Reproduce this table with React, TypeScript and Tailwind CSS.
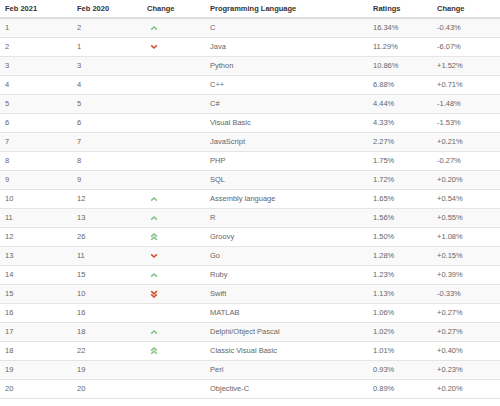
type Trend = "up" | "down" | "up2" | "down2" | "";

const rows: [number, number, Trend, string, string, string][] = [
  [1, 2, "up", "C", "16.34%", "-0.43%"],
  [2, 1, "down", "Java", "11.29%", "-6.07%"],
  [3, 3, "", "Python", "10.86%", "+1.52%"],
  [4, 4, "", "C++", "6.88%", "+0.71%"],
  [5, 5, "", "C#", "4.44%", "-1.48%"],
  [6, 6, "", "Visual Basic", "4.33%", "-1.53%"],
  [7, 7, "", "JavaScript", "2.27%", "+0.21%"],
  [8, 8, "", "PHP", "1.75%", "-0.27%"],
  [9, 9, "", "SQL", "1.72%", "+0.20%"],
  [10, 12, "up", "Assembly language", "1.65%", "+0.54%"],
  [11, 13, "up", "R", "1.56%", "+0.55%"],
  [12, 26, "up2", "Groovy", "1.50%", "+1.08%"],
  [13, 11, "down", "Go", "1.28%", "+0.15%"],
  [14, 15, "up", "Ruby", "1.23%", "+0.39%"],
  [15, 10, "down2", "Swift", "1.13%", "-0.33%"],
  [16, 16, "", "MATLAB", "1.06%", "+0.27%"],
  [17, 18, "up", "Delphi/Object Pascal", "1.02%", "+0.27%"],
  [18, 22, "up2", "Classic Visual Basic", "1.01%", "+0.40%"],
  [19, 19, "", "Perl", "0.93%", "+0.23%"],
  [20, 20, "", "Objective-C", "0.89%", "+0.20%"],
];

function TrendIcon({ t }: { t: Trend }) {
  if (!t) return null;
  const up = t === "up" || t === "up2";
  const color = up ? "#7fbf7f" : "#d2522f";
  const double = t === "up2" || t === "down2";
  return (
    <svg width="8" height="8" viewBox="0 0 8 8" className="block ml-[3px]">
      {up ? (
        <>
          <polyline points={double ? "1.2,6.8 4,4.2 6.8,6.8" : "1.2,5.6 4,3 6.8,5.6"} fill="none" stroke={color} strokeWidth="1.5" />
          {double && <polyline points="1.2,3.6 4,1 6.8,3.6" fill="none" stroke={color} strokeWidth="1.5" />}
        </>
      ) : (
        <>
          <polyline points={double ? "1.2,1.2 4,3.8 6.8,1.2" : "1.2,2.4 4,5 6.8,2.4"} fill="none" stroke={color} strokeWidth="1.6" />
          {double && <polyline points="1.2,4.4 4,7 6.8,4.4" fill="none" stroke={color} strokeWidth="1.6" />}
        </>
      )}
    </svg>
  );
}

export default function App() {
  const cell = "pl-[5px] h-[19px] align-middle border-t border-[#e4e4e4] whitespace-nowrap";
  return (
    <div className="w-[500px] h-[406px] bg-white overflow-hidden font-['Liberation_Sans',Arial,sans-serif] text-[7.5px] text-[#666]">
      <table className="w-[500px] table-fixed border-collapse">
        <colgroup>
          <col className="w-[72px]" />
          <col className="w-[70px]" />
          <col className="w-[63px]" />
          <col className="w-[163px]" />
          <col className="w-[64px]" />
          <col className="w-[68px]" />
        </colgroup>
        <thead>
          <tr className="text-[#333] font-bold text-left">
            {["Feb 2021", "Feb 2020", "Change", "Programming Language", "Ratings", "Change"].map((h, i) => (
              <th key={i} className="pl-[5px] h-[18px] align-middle border-b-2 border-[#dddddd] font-bold">
                {h}
              </th>
            ))}
          </tr>
        </thead>
        <tbody>
          {rows.map((r, i) => (
            <tr key={i} className={i % 2 === 0 ? "bg-[#f9f9f9]" : "bg-white"}>
              <td className={cell}>{r[0]}</td>
              <td className={cell}>{r[1]}</td>
              <td className={cell}>
                <TrendIcon t={r[2]} />
              </td>
              <td className={cell}>{r[3]}</td>
              <td className={cell}>{r[4]}</td>
              <td className={cell}>{r[5]}</td>
            </tr>
          ))}
          <tr>
            <td colSpan={6} className="border-t border-[#e4e4e4] h-0 p-0"></td>
          </tr>
        </tbody>
      </table>
    </div>
  );
}
